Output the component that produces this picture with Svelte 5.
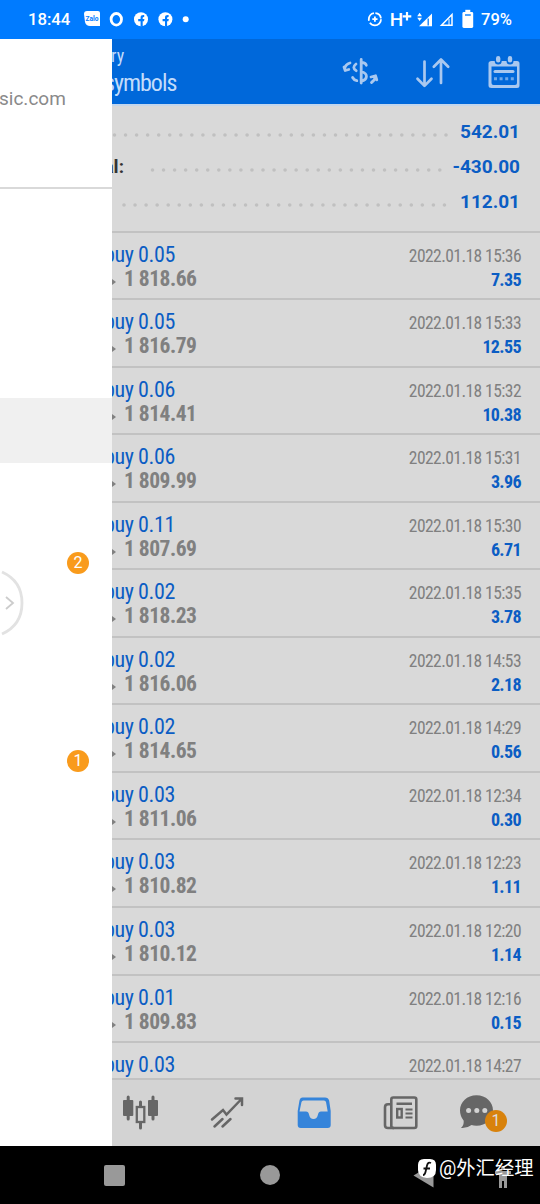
<script lang="ts">
	type Deal = { volume: string; price: string; time: string; profit: string };

	const deals: Deal[] = [
		{ volume: '0.05', price: '1 818.66', time: '2022.01.18 15:36', profit: '7.35' },
		{ volume: '0.05', price: '1 816.79', time: '2022.01.18 15:33', profit: '12.55' },
		{ volume: '0.06', price: '1 814.41', time: '2022.01.18 15:32', profit: '10.38' },
		{ volume: '0.06', price: '1 809.99', time: '2022.01.18 15:31', profit: '3.96' },
		{ volume: '0.11', price: '1 807.69', time: '2022.01.18 15:30', profit: '6.71' },
		{ volume: '0.02', price: '1 818.23', time: '2022.01.18 15:35', profit: '3.78' },
		{ volume: '0.02', price: '1 816.06', time: '2022.01.18 14:53', profit: '2.18' },
		{ volume: '0.02', price: '1 814.65', time: '2022.01.18 14:29', profit: '0.56' },
		{ volume: '0.03', price: '1 811.06', time: '2022.01.18 12:34', profit: '0.30' },
		{ volume: '0.03', price: '1 810.82', time: '2022.01.18 12:23', profit: '1.11' },
		{ volume: '0.03', price: '1 810.12', time: '2022.01.18 12:20', profit: '1.14' },
		{ volume: '0.01', price: '1 809.83', time: '2022.01.18 12:16', profit: '0.15' },
		{ volume: '0.03', price: '', time: '2022.01.18 14:27', profit: '' }
	];

	// from / to: first and last dot of the leader
	const totals = [
		{ label: '', value: '542.01', from: 114.5, to: 447 },
		{ label: 'al:', value: '-430.00', from: 152.5, to: 440 },
		{ label: '', value: '112.01', from: 124, to: 446 }
	];
</script>

<div class="screen">
	<div class="status">
		<span class="clock">18:44</span>
		<svg class="notices" width="110" height="20" viewBox="82 9 110 20">
			<path d="M87 11h11q2 0 2 2v13H90q-4 0-5-4l-1-8q0-3 3-3z" fill="#fff" />
			<text x="85.6" y="20.8" class="zalo" textLength="13" lengthAdjust="spacingAndGlyphs">Zalo</text>
			<ellipse cx="116.3" cy="19.3" rx="5.2" ry="5.8" fill="none" stroke="#fff" stroke-width="2.8" />
			{#each [141, 165.4] as x}
				<circle cx={x} cy="19.3" r="7" fill="#fff" />
				<path d="M{x - 0.4} 26.5v-5.2h-2.4v-2.3h2.4v-1.6q0-2.7 3.6-2.4v1.9q-1.6-.1-1.5 1v1.1h1.7l-.4 2.3h-1.3v5.2z" fill="#007bff" />
			{/each}
			<circle cx="185.7" cy="19.3" r="3" fill="#fff" />
		</svg>
		<svg class="signals" width="110" height="24" viewBox="366 7 110 24">
			<g fill="none" stroke="#fff">
				<circle cx="374.9" cy="19.2" r="6.1" stroke-width="1.8" stroke-dasharray="15 2 10 1.5 8 2" />
				<path d="M372.3 19.2h5.2M374.9 16.600v5.200" stroke-width="1.8" />
				<path d="M441.5 25.2h10.5V14.5z" stroke-width="1.5" />
			</g>
			<text x="389.8" y="25.8" class="net">H</text>
			<path d="M402.7 16.3h8.6M407 12v8.6" stroke="#fff" stroke-width="2.2" />
			<path d="M419 26.3l13-12.8v12.8z" fill="#fff" />
			<path d="M428.2 18.5v7" stroke="#007bff" stroke-width="1.3" />
			<path d="M417.2 16.2l2.4-3.4 2.4 3.4zM417.2 17.8l2.4 3.2 2.4-3.2z" fill="#fff" />
			<path d="M449 19v6" stroke="#fff" />
			<rect x="462.4" y="12" width="10.8" height="16" rx="1.4" fill="#fff" />
			<rect x="465.3" y="9.8" width="5" height="3" fill="#fff" />
			<path d="M465 15h5.8" stroke="#007bff" stroke-width="1.4" />
		</svg>
		<span class="battery">79%</span>
	</div>

	<div class="toolbar">
		<div class="heading">
			<span class="small">ry</span>
			<span class="big">symbols</span>
		</div>
		<svg width="38" height="34" viewBox="342 54 38 34" fill="none" stroke="#a9c8ef" stroke-width="2.8" stroke-linecap="round" stroke-linejoin="round">
			<path d="M362.2 58.5v23.5M357 63q-4.5 3.5.2 6.7M353.6 76.5q1.5 2.8 4.2 3.2M363 61.5q3.8.5 4.3 2.8M362.4 70.5q5.3 1.8 5 5-.3 3.7-5 4.5" />
			<path d="M351 62q-4.7 1.5-5.3 5.5M345 66l1.2 3.5 3.6-1M372.5 81.5q3.7-2.5 3.8-6M372 76l4.6-1.2 1.2 4" />
		</svg>
		<svg width="36" height="32" viewBox="415 55 36 32" fill="none" stroke="#a9c8ef" stroke-width="2.7" stroke-linecap="round" stroke-linejoin="round">
			<path d="M424.5 60.5v24M417.5 77.7l7 7.2 7-7.2M441 82V58.5M433.8 65.7l7.2-7.2 7.2 7.2" />
		</svg>
		<svg width="34" height="34" viewBox="487 54 34 34">
			<path d="M491.5 60h25.5q2.5 0 2.5 2.5v22q0 2.5-2.5 2.5h-25.5q-3 0-3-2.5v-22q0-2.5 3-2.5zM491.5 65.5v16.5q0 2 2 2h21.5q2 0 2-2v-16.5z" fill="#a9c8ef" fill-rule="evenodd" />
			<path d="M498.2 57v3M510 57v3" stroke="#0068da" stroke-width="7" stroke-linecap="round" />
			<path d="M498.2 57.2v2M510 57.2v2" stroke="#a9c8ef" stroke-width="4.4" stroke-linecap="round" />
			<path d="M495 70.5h18" stroke="#a9c8ef" stroke-width="3" stroke-linecap="round" />
			<path d="M494 77.7h20" stroke="#6fa8e9" stroke-width="3" stroke-dasharray="3 2.6" />
		</svg>
	</div>

	<div class="history">
		<div class="totals">
			{#each totals as t}
				<div class="total">
					<span class="label">{t.label}</span>
					<svg class="leader" width="340" height="6" viewBox="112 0 340 6">
						<path d="M{t.from} 3H{t.to}" stroke="#c0c0c0" stroke-width="3.6" stroke-linecap="round" stroke-dasharray="0 11.05" />
					</svg>
					<b>{t.value}</b>
				</div>
			{/each}
		</div>

		{#each deals as d}
			<div class="deal">
				<div class="column">
					<span class="side">buy {d.volume}</span>
					{#if d.price}
						<span class="price"><i class="arrow"></i>{d.price}</span>
					{/if}
				</div>
				<div class="column right">
					<span class="time">{d.time}</span>
					{#if d.profit}
						<span class="profit">{d.profit}</span>
					{/if}
				</div>
			</div>
		{/each}
	</div>

	<div class="tabs">
		<svg width="38" height="38" viewBox="122 1092 38 38" fill="#666">
			<path d="M128.2 1096v22M153 1096v22M140.5 1101v26" stroke="#666" stroke-width="3" stroke-linecap="round" />
			<rect x="123" y="1099" width="10.3" height="16" rx="1" />
			<rect x="148" y="1099" width="10" height="16" rx="1" />
			<rect x="136.8" y="1106" width="7.5" height="15" fill="#d3d3d3" stroke="#666" stroke-width="2.3" />
		</svg>
		<svg width="36" height="34" viewBox="210 1094 36 34" fill="none" stroke="#666" stroke-width="2.5" stroke-linecap="round">
			<path d="M212 1118.5l11-9.5 3.5 4.5 15-15.5M235.5 1097.5h6.5v6.5M214.5 1125.5l8-7.5M222.5 1125.5l8-7.5" />
		</svg>
		<svg width="36" height="34" viewBox="296 1094 36 34">
			<path d="M302.5 1097.5h22.5q2.5 0 3.2 2.5l1.5 10v14q0 2-2 2h-27q-2 0-2-2v-14l1.7-10q.6-2.5 2.1-2.5z" fill="#3584da" stroke="#3584da" stroke-width="2" />
			<path d="M303.5 1099.5h20.5q1.5 0 2 1.5l1.7 9.5h-6.7q-2.5 0-3 3-1 4.5-4.5 4.5t-4.5-4.5q-.5-3-3-3h-6.5l2-9.5q.5-1.500 2-1.500z" fill="#d3d3d3" />
		</svg>
		<svg width="38" height="36" viewBox="382 1093 38 36" fill="none" stroke="#666" stroke-width="2.6">
			<rect x="391.3" y="1096.5" width="25" height="30.5" rx="2" />
			<path d="M391 1103.2h-3q-3 0-3 3v18q0 2.8 3 2.8h6M396.5 1102.8h15.5" />
			<path d="M405.5 1108.5h7M405.5 1112.5h7M405.5 1116.5h7" stroke-width="1.9" />
			<rect x="397.2" y="1108" width="4.5" height="8.5" stroke-width="2.4" />
		</svg>
		<div class="chat">
			<svg width="36" height="36" viewBox="458 1094 36 36">
				<path d="M476.5 1095.3c9.5 0 16.5 6.7 16.5 15.2s-7 15.2-16.5 15.2q-3 0-5-.7-4.5 3.5-10.5 3 3-2.5 2.7-7.2-3.7-4.8-3.7-10.3c0-8.5 7-15.2 16.500-15.200z" fill="#666" />
				<circle cx="468.6" cy="1110.6" r="2.5" fill="#d3d3d3" />
				<circle cx="476.8" cy="1110.6" r="2.5" fill="#d3d3d3" />
				<circle cx="484.8" cy="1110.6" r="2.5" fill="#d3d3d3" />
			</svg>
			<span class="badge dim">1</span>
		</div>
	</div>

	<div class="navbar">
		<i class="recents"></i>
		<i class="home"></i>
		<svg class="back" width="24" height="26" viewBox="412 1162 24 26"><path d="M413.5 1175.500l20-12v24z" fill="#999" /></svg>
		<svg class="access" width="18" height="22" viewBox="494 1165 18 22" fill="#999"><path d="M495 1170h16v3h-4v14h-3v-7h-2v7h-3v-14h-4z" /><circle cx="503" cy="1167" r="2" /></svg>
	</div>

	<!-- side menu, pulled over the history page -->
	<div class="drawer">
		<div class="account">sic.com</div>
		<div class="selected"></div>
		<span class="badge first">2</span>
		<span class="badge second">1</span>
		<svg class="handle" width="26" height="72" viewBox="0 567 26 72" fill="none">
			<path d="M2 572q20 9 20 31t-20 31" stroke="#e2e2e2" stroke-width="2.8" />
			<path d="M6 597l7 6-7 6" stroke="#ccc" stroke-width="1.8" />
		</svg>
	</div>

	<div class="watermark">
		<svg width="20" height="22" viewBox="0 0 20 22">
			<path d="M7 1h6q6 0 6 6v5q0 8-9 8-9-1-9-8V7q0-6 6-6z" fill="#fff" />
			<path d="M14 5q-3-1.5-4 2.5L8.5 14q-.7 3-2.5 3M6.5 10.5H13" fill="none" stroke="#111" stroke-width="1.8" />
		</svg>
		<span>@外汇经理</span>
	</div>
</div>

<style>
	:global(body) {
		margin: 0;
		background: #000;
	}

	.screen {
		position: relative;
		display: flex;
		flex-direction: column;
		width: 540px;
		height: 1204px;
		overflow: hidden;
		font-family: 'Roboto Condensed', Roboto, sans-serif;
		font-stretch: 75%;
		white-space: nowrap;
	}

	svg {
		display: block;
		flex: none;
	}

	.status {
		display: flex;
		align-items: center;
		box-sizing: border-box;
		height: 39px;
		padding: 0 27px 1px 28px;
		background: #007bff;
		color: #fff;
		font-family: Roboto, sans-serif;
		font-stretch: 100%;
		font-weight: 500;
		font-size: 16.7px;
	}

	.clock {
		width: 54px;
	}

	.signals {
		margin: 0 5px 0 auto;
	}

	.zalo {
		font-size: 7px;
		font-weight: 700;
		fill: #007bff;
	}

	.net {
		font-size: 19px;
		fill: #fff;
	}

	.battery {
		width: 32px;
		font-size: 16.5px;
	}

	.toolbar {
		display: flex;
		align-items: center;
		gap: 36px;
		box-sizing: border-box;
		height: 67px;
		padding: 0 19px 0 104px;
		background: #0068da;
		border-bottom: 2px solid #c3d6ec;
		color: #c3dcfa;
	}

	.heading {
		display: flex;
		flex-direction: column;
		flex: 1;
	}

	.small {
		padding-left: 7px;
		font-size: 18px;
		line-height: 24px;
	}

	.big {
		font-size: 24px;
		line-height: 31px;
		letter-spacing: -1px;
	}

	.history {
		flex: 1;
		min-height: 0;
		overflow: hidden;
		background: #d9d9d9;
	}

	.totals {
		box-sizing: border-box;
		height: 126.5px;
		padding: 8px 20px 0 112px;
		border-bottom: 2px solid #c2c2c2;
	}

	.total {
		display: flex;
		align-items: center;
		height: 35px;
		font-family: Roboto, sans-serif;
		font-stretch: 100%;
		font-size: 19px;
	}

	.label {
		display: flex;
		justify-content: flex-end;
		width: 12px;
		margin-right: -12px;
		font-weight: 700;
		color: #333;
	}

	.leader {
		margin-top: 6px;
	}

	.total b {
		width: 68px;
		display: flex;
		justify-content: flex-end;
		color: #0b5dc4;
	}

	.deal {
		display: flex;
		justify-content: space-between;
		box-sizing: border-box;
		height: 67.55px;
		padding: 10px 19px 0 104px;
		border-bottom: 2px solid #c2c2c2;
	}

	.column {
		display: flex;
		flex-direction: column;
		line-height: 24px;
	}

	.right {
		align-items: flex-end;
		padding-top: 1px;
	}

	.side {
		font-size: 22px;
		letter-spacing: -0.4px;
		color: #0b5dc4;
	}

	.time {
		font-size: 17.5px;
		letter-spacing: -0.55px;
		color: #808080;
	}

	.price {
		display: flex;
		align-items: center;
		font-size: 21.5px;
		font-weight: 700;
		letter-spacing: -0.5px;
		color: #808080;
	}

	.arrow {
		margin: 6px 8px 0 8px;
		border: solid transparent;
		border-width: 3px 0 3px 4px;
		border-left-color: #808080;
	}

	.profit {
		font-size: 18px;
		font-weight: 700;
		letter-spacing: -0.6px;
		color: #0b5dc4;
	}

	.tabs {
		display: flex;
		gap: 50px;
		align-items: center;
		box-sizing: border-box;
		height: 68px;
		padding: 0 0 3px 122px;
		background: #d3d3d3;
		border-top: 2px solid #c2c2c2;
	}

	.chat {
		position: relative;
		margin-left: -12px;
	}

	.badge {
		position: absolute;
		width: 22px;
		height: 22px;
		border-radius: 50%;
		background: #f99b1c;
		color: #fff;
		font-family: Roboto, sans-serif;
		font-stretch: 100%;
		font-size: 16px;
		line-height: 22px;
		text-align: center;
	}

	.dim {
		left: 27px;
		top: 16px;
		background: #d8820c;
		color: #ddd;
	}

	.navbar {
		display: flex;
		align-items: center;
		box-sizing: border-box;
		height: 58px;
		padding: 0 28px 0 104px;
		background: #000;
	}

	.recents {
		width: 21px;
		height: 21px;
		margin-right: 135px;
		border-radius: 2px;
		background: #999;
	}

	.home {
		width: 20px;
		height: 20px;
		border-radius: 50%;
		background: #999;
	}

	.back {
		margin-left: 132px;
	}

	.access {
		margin: 4px 0 0 auto;
	}

	.drawer {
		position: absolute;
		left: 0;
		top: 39px;
		width: 111.5px;
		height: 1107px;
		background: #fff;
	}

	.account {
		box-sizing: border-box;
		height: 149.5px;
		padding-top: 48px;
		border-bottom: 2px solid #d9d9d9;
		color: #8a8a8a;
		font-family: Roboto, sans-serif;
		font-stretch: 100%;
		font-size: 19px;
		line-height: 24px;
		text-indent: -1px;
	}

	.selected {
		height: 65px;
		margin-top: 209.5px;
		background: #f0f0f0;
	}

	.first {
		left: 67px;
		top: 513px;
	}

	.second {
		left: 67px;
		top: 711px;
	}

	.handle {
		position: absolute;
		left: 0;
		top: 528px;
	}

	.watermark {
		position: absolute;
		left: 417px;
		top: 1158px;
		display: flex;
		align-items: center;
		gap: 2px;
		color: #fff;
		font-family: Roboto, 'Noto Sans CJK SC', sans-serif;
		font-stretch: 100%;
		font-size: 19.3px;
		line-height: 22px;
	}
</style>
